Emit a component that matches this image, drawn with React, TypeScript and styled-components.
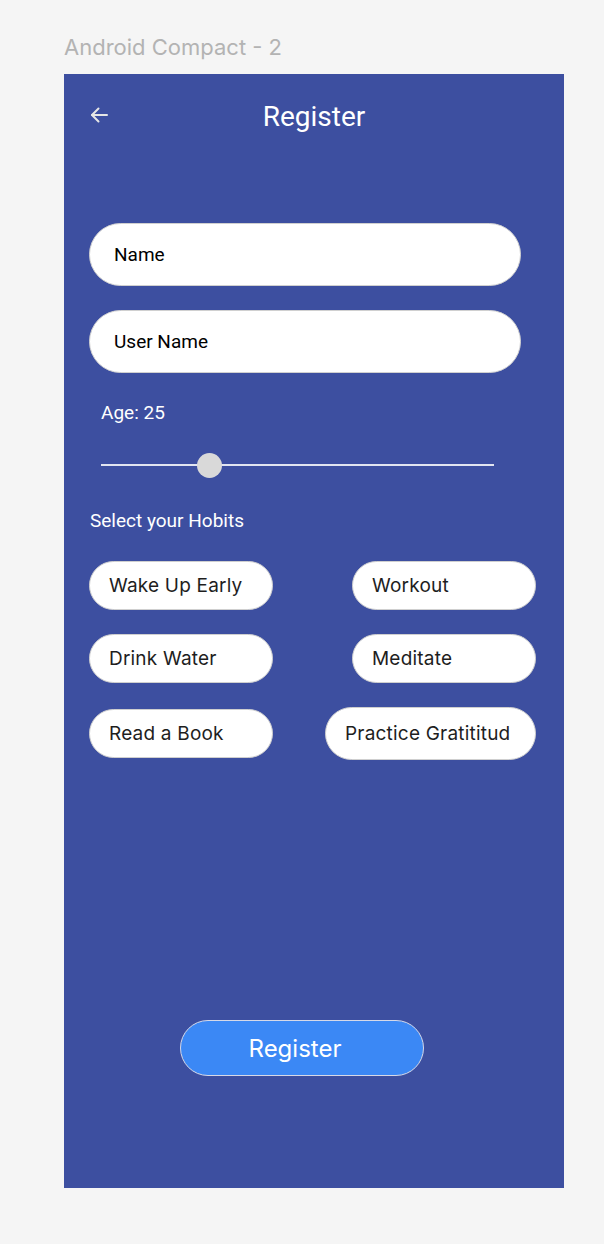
import styled, { createGlobalStyle } from "styled-components"

const GlobalStyle = createGlobalStyle`
    html, body {
        margin    : 0;
        padding   : 0;
        background: #f5f5f5;
    }
    * { box-sizing: border-box; }
`

const Canvas = styled.div`
    width      : 604px;
    height     : 1244px;
    padding    : 32px 0 0 64px;
    background : #f5f5f5;
    font-family: Inter, "Noto Sans", sans-serif;
`

const FrameLabel = styled.div`
    height     : 42px;
    font-size  : 22px;
    line-height: 30px;
    color      : #b3b3b3;
`

const Frame = styled.div`
    width         : 500px;
    height        : 1114px;
    background    : #3d4fa0;
    display       : flex;
    flex-direction: column;
    font-family   : Roboto, "Liberation Sans", sans-serif;
`

const Header = styled.header`
    height               : 82px;
    padding              : 0 25px;
    display              : grid;
    grid-template-columns: 1fr auto 1fr;
    align-items          : center;
`

const BackButton = styled.button`
    justify-self: start;
    display     : flex;
    padding     : 0;
    border      : none;
    background  : none;
    cursor      : pointer;
`

const Title = styled.h1`
    margin     : 2px 0 0;
    font-size  : 28px;
    font-weight: 400;
    color      : #ffffff;
`

const Form = styled.div`
    display       : flex;
    flex-direction: column;
    padding       : 67px 0 0 25px;
`

const Field = styled.input<{ $gap?: number }>`
    width        : 432px;
    height       : 63px;
    margin-top   : ${p => p.$gap ?? 0}px;
    padding      : 0 24px;
    border       : 1px solid #d0d0d0;
    border-radius: 32px;
    background   : #ffffff;
    font-family  : Roboto, "Liberation Sans", sans-serif;
    font-size    : 19px;
    color        : #000000;
    outline      : none;

    &::placeholder { color: #000000; }
`

const AgeLabel = styled.div`
    margin-top  : 27px;
    padding-left: 12px;
    font-size   : 19px;
    line-height : 26px;
    color       : #ffffff;
`

const SliderWrap = styled.div`
    position: relative;
    width   : 393px;
    height  : 25px;
    margin  : 27px 0 0 12px;
`

const Track = styled.div`
    position  : absolute;
    left      : 0;
    right     : 0;
    top       : 11px;
    height    : 1.5px;
    background: rgba(255, 255, 255, 0.85);
`

const Thumb = styled.div`
    position     : absolute;
    top          : 0;
    width        : 25px;
    height       : 25px;
    margin-left  : -12.5px;
    border-radius: 50%;
    background   : #d9d9d9;
`

const SectionLabel = styled.div`
    margin-top  : 30px;
    padding-left: 1px;
    font-size   : 19px;
    line-height : 26px;
    color       : #ffffff;
`

const HabitGrid = styled.div`
    display              : grid;
    grid-template-columns: 1fr 1fr;
    row-gap              : 24px;
    width                : 447px;
    margin-top           : 27px;
    align-items          : center;
`

const Chip = styled.button<{ $wide?: boolean; $right?: boolean }>`
    justify-self  : ${p => p.$right ? "end" : "start"};
    width         : ${p => p.$wide ? 211 : 184}px;
    height        : ${p => p.$wide ? 53 : 49}px;
    padding       : 0 19px;
    text-align    : left;
    border        : 1px solid #cfcfcf;
    border-radius : 27px;
    background    : #ffffff;
    font-family   : Inter, "Noto Sans", sans-serif;
    font-size     : 19px;
    letter-spacing: 0.2px;
    color         : #1e1e1e;
    cursor        : pointer;
    white-space   : nowrap;
`

const Footer = styled.div`
    display        : flex;
    justify-content: center;
    margin-top     : auto;
    padding        : 0 24px 112px 0;
`

const SubmitButton = styled.button`
    width        : 244px;
    height       : 56px;
    padding      : 0 14px 0 0;
    border       : 1px solid #d6d9e8;
    border-radius: 28px;
    background   : #3b88f5;
    font-family  : Inter, "Noto Sans", sans-serif;
    font-size    : 24px;
    color        : #ffffff;
    cursor       : pointer;
`

const habits = [
    { label: 'Wake Up Early' },
    { label: 'Workout', right: true },
    { label: 'Drink Water' },
    { label: 'Meditate', right: true },
    { label: 'Read a Book' },
    { label: 'Practice Gratititud', right: true, wide: true },
]

const age = 25
const ageRatio = 0.277

export default function App() {
    return (
        <>
            <GlobalStyle />
            <Canvas>
                <FrameLabel>Android Compact - 2</FrameLabel>
                <Frame>
                    <Header>
                        <BackButton aria-label='Back'>
                            <svg width='20' height='20' viewBox='0 0 20 20' fill='none' stroke='#e6e6e6' strokeWidth='2' strokeLinecap='round' strokeLinejoin='round'>
                                <path d='M18 10H3' />
                                <path d='M9.5 3.5L3 10l6.5 6.5' />
                            </svg>
                        </BackButton>
                        <Title>Register</Title>
                        <span />
                    </Header>
                    <Form>
                        <Field placeholder='Name' />
                        <Field placeholder='User Name' $gap={24} />
                        <AgeLabel>Age: {age}</AgeLabel>
                        <SliderWrap>
                            <Track />
                            <Thumb style={{ left: `${ageRatio * 100}%` }} />
                        </SliderWrap>
                        <SectionLabel>Select your Hobits</SectionLabel>
                        <HabitGrid>
                            {habits.map(h => (
                                <Chip key={h.label} $right={h.right} $wide={h.wide}>
                                    {h.label}
                                </Chip>
                            ))}
                        </HabitGrid>
                    </Form>
                    <Footer>
                        <SubmitButton>Register</SubmitButton>
                    </Footer>
                </Frame>
            </Canvas>
        </>
    )
}
